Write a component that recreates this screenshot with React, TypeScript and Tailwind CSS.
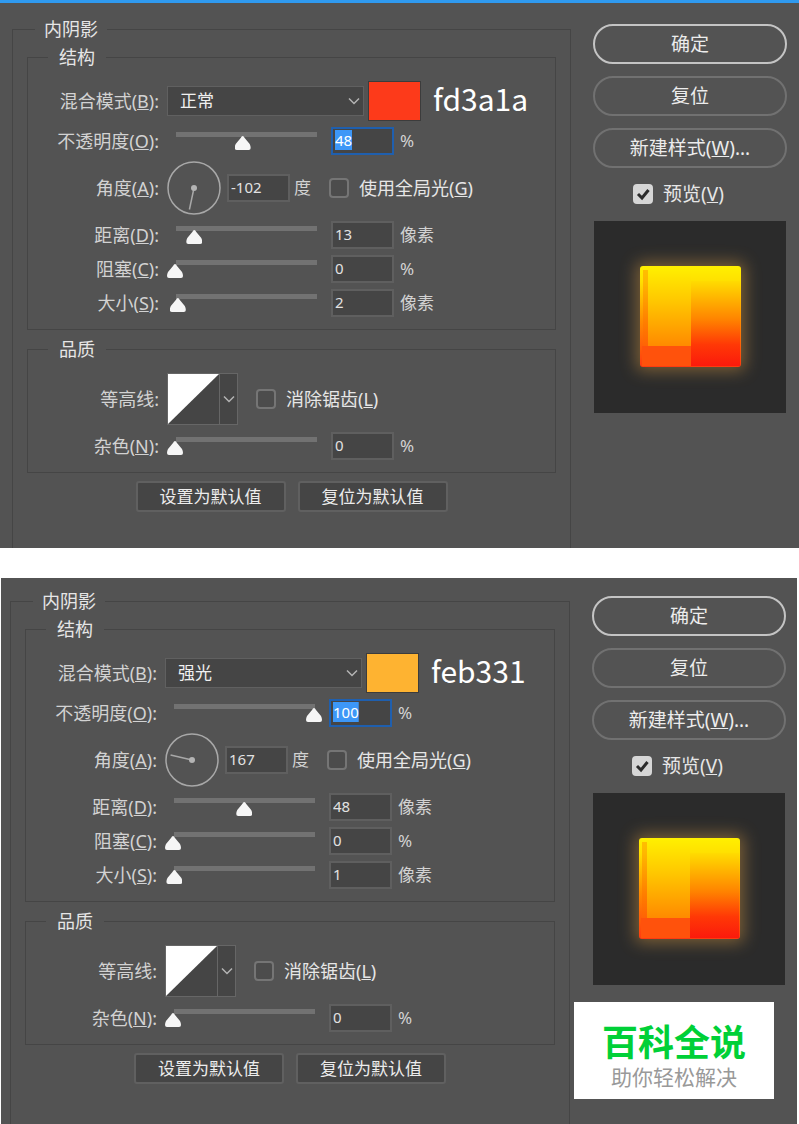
import { useState, type ReactNode } from "react";
import clsx from "clsx";

type Settings = {
  id: string;
  mode: string;
  color: string;
  opacity: number;
  angle: number;
  distance: number;
  choke: number;
  size: number;
  noise: number;
};

const dialogs: Settings[] = [
  { id: "first", mode: "正常", color: "fd3a1a", opacity: 48, angle: -102, distance: 13, choke: 0, size: 2, noise: 0 },
  { id: "second", mode: "强光", color: "feb331", opacity: 100, angle: 167, distance: 48, choke: 0, size: 1, noise: 0 },
];

function Chevron() {
  return (
    <svg viewBox="0 0 12 8" className="w-3 h-2" fill="none" stroke="#b4b4b4" strokeWidth="1.5">
      <path d="M1 1.5 6 6.5 11 1.5" />
    </svg>
  );
}

// Label text with its underlined shortcut letter
function Key({ text, letter, tail }: { text: string; letter?: string; tail?: string }) {
  return (
    <>
      {text}
      {letter && (
        <>
          (<span className="underline underline-offset-1 decoration-1">{letter}</span>)
        </>
      )}
      {tail}
    </>
  );
}

function NumberBox({
  id,
  value,
  active,
  onChange,
}: {
  id: string;
  value: number;
  active?: boolean;
  onChange: (v: number) => void;
}) {
  return (
    <input
      id={id}
      type="text"
      value={value}
      onChange={(e) => onChange(Number(e.target.value) || 0)}
      style={active ? { backgroundSize: `${String(value).length}ch 20px` } : undefined}
      className={clsx(
        "w-[63px] h-7 border-2 pl-0.5 pb-0.5 text-[15px] outline-none bg-[#454545]",
        active
          ? "border-[#1f5fae] text-white bg-[linear-gradient(#3d97f7,#3d97f7)] bg-no-repeat bg-origin-content bg-left"
          : "border-[#5f5f5f] text-[#e2e2e2]"
      )}
    />
  );
}

function Row({ label, htmlFor, className, children }: { label: ReactNode; htmlFor: string; className: string; children: ReactNode }) {
  return (
    <div className={clsx("flex items-center", className)}>
      <label htmlFor={htmlFor} className="w-[131px] shrink-0 mr-2 text-right text-[18px] whitespace-nowrap text-[#d2d2d2]">
        {label}
      </label>
      {children}
    </div>
  );
}

function SliderRow({
  id,
  text,
  letter,
  unit,
  initial,
  max = 100,
  active,
  className,
}: {
  id: string;
  text: string;
  letter: string;
  unit: string;
  initial: number;
  max?: number;
  active?: boolean;
  className: string;
}) {
  const [value, setValue] = useState(initial);
  return (
    <Row label={<Key text={text} letter={letter} tail=":" />} htmlFor={id} className={className}>
      <input
        type="range"
        aria-label={text}
        min={0}
        max={max}
        value={value}
        onChange={(e) => setValue(Number(e.target.value))}
        className="appearance-none w-[157px] h-[18px] mr-[7px] bg-transparent [&::-webkit-slider-runnable-track]:h-[18px] [&::-webkit-slider-runnable-track]:bg-[linear-gradient(to_right,transparent_9px,#727272_9px,#727272_150px,transparent_150px)] [&::-webkit-slider-runnable-track]:bg-no-repeat [&::-webkit-slider-runnable-track]:bg-size-[100%_5px] [&::-webkit-slider-thumb]:appearance-none [&::-webkit-slider-thumb]:mt-1 [&::-webkit-slider-thumb]:w-4 [&::-webkit-slider-thumb]:h-[14px] [&::-webkit-slider-thumb]:bg-[#f6f6f6] [&::-webkit-slider-thumb]:[clip-path:path('M8_0_Q9_0_10_2L15_8Q16_10_16_12Q16_14_14_14L2_14Q0_14_0_12Q0_10_1_8L6_2Q7_0_8_0Z')]"
      />
      <NumberBox id={id} value={value} active={active} onChange={setValue} />
      <span className="ml-1.5 text-[17px] text-[#d2d2d2]">{unit}</span>
    </Row>
  );
}

function CheckBox({ id, checked, className, children }: { id: string; checked?: boolean; className?: string; children: ReactNode }) {
  const [on, setOn] = useState(!!checked);
  return (
    <div className={clsx("flex items-center whitespace-nowrap text-[#e6e6e6]", className)}>
      <span className="grid place-items-center">
        <input
          id={id}
          type="checkbox"
          checked={on}
          onChange={() => setOn(!on)}
          className="col-start-1 row-start-1 appearance-none size-5 rounded border-2 border-[#757575] bg-[#4c4c4c] checked:bg-[#d6d6d6] checked:border-[#d6d6d6]"
        />
        {on && (
          <svg viewBox="0 0 20 20" className="col-start-1 row-start-1 size-5 pointer-events-none" fill="none" stroke="#2c2c2c" strokeWidth="3">
            <path d="M5 10 9 14 15.5 6" />
          </svg>
        )}
      </span>
      <label htmlFor={id} className="ml-2.5">
        {children}
      </label>
    </div>
  );
}

function Dial({ angle }: { angle: number }) {
  const rad = (angle * Math.PI) / 180;
  return (
    <svg viewBox="0 0 54 54" className="size-[54px] shrink-0 mr-1.5" fill="none" stroke="#a8a8a8" strokeWidth="1.5">
      <circle cx="27" cy="27" r="26" />
      <line x1="27" y1="27" x2={27 + 22 * Math.cos(rad)} y2={27 - 22 * Math.sin(rad)} />
      <circle cx="27" cy="27" r="3" fill="#b4b4b4" stroke="none" />
    </svg>
  );
}

function Preview({ id }: { id: string }) {
  return (
    <svg viewBox="0 0 192 192" className="w-full bg-[#2b2b2b]">
      <defs>
        <linearGradient id={`${id}-base`} x1="0" y1="0" x2="0" y2="1">
          <stop offset="0" stopColor="#fff000" />
          <stop offset="0.15" stopColor="#ffe000" />
          <stop offset="0.55" stopColor="#ff8a00" />
          <stop offset="1" stopColor="#ff3a10" />
        </linearGradient>
        <linearGradient id={`${id}-left`} x1="0" y1="0" x2="0" y2="1">
          <stop offset="0" stopColor="#ffec00" />
          <stop offset="0.4" stopColor="#ffc800" />
          <stop offset="1" stopColor="#ff8a00" />
        </linearGradient>
        <linearGradient id={`${id}-right`} x1="0" y1="0" x2="0" y2="1">
          <stop offset="0" stopColor="#ffdc00" />
          <stop offset="0.45" stopColor="#ff8400" />
          <stop offset="0.75" stopColor="#ff3806" />
          <stop offset="1" stopColor="#fb1a0c" />
        </linearGradient>
        <filter id={`${id}-glow`} x="-30%" y="-30%" width="160%" height="160%">
          <feGaussianBlur stdDeviation="8" />
        </filter>
      </defs>
      <rect x="42" y="41" width="109" height="109" rx="6" fill="#c89040" opacity="0.5" filter={`url(#${id}-glow)`} />
      <rect x="46" y="45" width="101" height="101" rx="3" fill={`url(#${id}-base)`} />
      <rect x="49" y="49" width="5" height="76" fill="#ff6a00" opacity="0.35" />
      <rect x="54" y="49" width="43" height="76" fill={`url(#${id}-left)`} />
      <rect x="48" y="125" width="49" height="20" fill="#ff520c" />
      <rect x="97" y="60" width="49" height="85" fill={`url(#${id}-right)`} />
    </svg>
  );
}

function Group({ title, className, children }: { title: string; className: string; children: ReactNode }) {
  return (
    <fieldset className={clsx("border border-[#454545] min-w-0", className)}>
      <legend className="ml-5 px-[11px] h-6 leading-6 text-[18px] text-[#e6e6e6]">{title}</legend>
      {children}
    </fieldset>
  );
}

const pill = "h-10 rounded-full border-2 text-[19px] text-[#ececec]";
const flatButton = "w-[150px] h-[31px] border-2 border-[#606060] rounded-[3px] bg-[#454545] text-[17px] leading-none text-[#ececec]";

function InnerShadowDialog({ data, className }: { data: Settings; className: string }) {
  const [angle, setAngle] = useState(data.angle);
  const { id } = data;

  return (
    <section className={clsx("flex gap-[22px] bg-[#535353]", className)}>
      <fieldset className="flex-1 min-w-0 border border-b-0 border-[#454545] px-3.5">
        <legend className="ml-2 px-[9px] h-6 leading-6 text-[18px] text-[#e6e6e6]">内阴影</legend>

        <Group title="结构" className="mt-1 pt-3 pb-[9px]">
          <Row label={<Key text="混合模式" letter="B" tail=":" />} htmlFor={`${id}-mode`} className="h-10">
            <span className="grid items-center w-[197px] shrink-0">
              <select
                id={`${id}-mode`}
                defaultValue={data.mode}
                className="col-start-1 row-start-1 appearance-none w-full h-[30px] pl-3 border border-[#606060] bg-[#454545] text-[17px] text-[#f0f0f0]"
              >
                <option>正常</option>
                <option>强光</option>
              </select>
              <span className="col-start-1 row-start-1 justify-self-end mr-1 pointer-events-none">
                <Chevron />
              </span>
            </span>
            <button
              type="button"
              aria-label={data.color}
              style={{ backgroundColor: `#${data.color}` }}
              className="w-[53px] h-10 shrink-0 ml-1 border border-[#3c3c3c]"
            />
            <span className="ml-3 pb-1.5 text-[30px] leading-10 text-white font-['Noto_Sans_CJK_SC',sans-serif]">{data.color}</span>
          </Row>
          <SliderRow id={`${id}-opacity`} text="不透明度" letter="O" unit="%" initial={data.opacity} active className="h-10" />
          <Row label={<Key text="角度" letter="A" tail=":" />} htmlFor={`${id}-angle`} className="h-[54px]">
            <Dial angle={angle} />
            <NumberBox id={`${id}-angle`} value={angle} onChange={setAngle} />
            <span className="ml-1 text-[17px] text-[#d2d2d2]">度</span>
            <CheckBox id={`${id}-global`} className="ml-[18px] text-[18px]">
              <Key text="使用全局光" letter="G" />
            </CheckBox>
          </Row>
          <SliderRow id={`${id}-distance`} text="距离" letter="D" unit="像素" initial={data.distance} max={95} className="mt-[3px] h-[34px]" />
          <SliderRow id={`${id}-choke`} text="阻塞" letter="C" unit="%" initial={data.choke} className="h-[34px]" />
          <SliderRow id={`${id}-size`} text="大小" letter="S" unit="像素" initial={data.size} className="h-[34px]" />
        </Group>

        <Group title="品质" className="mt-[7px] pt-3 pb-[9px]">
          <Row label="等高线:" htmlFor={`${id}-contour`} className="h-[52px]">
            <div className="flex h-[52px] shrink-0 border border-[#666666] bg-[#454545]">
              <button id={`${id}-contour`} type="button" className="border-r border-[#666666]">
                <svg viewBox="0 0 51 50" className="w-[51px] h-[50px]">
                  <path d="M0 0H51L0 50Z" fill="#ffffff" />
                </svg>
              </button>
              <button type="button" aria-label="等高线" className="w-[17px] grid place-items-center">
                <Chevron />
              </button>
            </div>
            <CheckBox id={`${id}-aa`} className="ml-[18px] text-[18px]">
              <Key text="消除锯齿" letter="L" />
            </CheckBox>
          </Row>
          <SliderRow id={`${id}-noise`} text="杂色" letter="N" unit="%" initial={data.noise} className="mt-1 h-[34px]" />
        </Group>

        <div className="mt-2 flex justify-center gap-3">
          <button type="button" className={flatButton}>设置为默认值</button>
          <button type="button" className={flatButton}>复位为默认值</button>
        </div>
      </fieldset>

      <div className="w-[194px] shrink-0 mt-[7px] flex flex-col gap-3">
        <button type="button" className={clsx(pill, "border-[#c4c4c4]")}>确定</button>
        <button type="button" className={clsx(pill, "border-[#717171]")}>复位</button>
        <button type="button" className={clsx(pill, "border-[#717171]")}>
          <Key text="新建样式" letter="W" tail="..." />
        </button>
        <CheckBox id={`${id}-preview`} checked className="h-7 ml-10 text-[19px]">
          <Key text="预览" letter="V" />
        </CheckBox>
        <div className="p-px">
          <Preview id={id} />
        </div>
      </div>
    </section>
  );
}

export default function App() {
  return (
    <main className="relative bg-white font-['Noto_Sans','Noto_Sans_CJK_SC',sans-serif]">
      <InnerShadowDialog data={dialogs[0]} className="border-t-3 border-[#2f9af0] pt-3.5 px-3 [&>fieldset]:pb-9" />
      <InnerShadowDialog data={dialogs[1]} className="mt-[30px] ml-px mr-0.5 pt-[11px] pl-[9px] pr-[11px] [&>fieldset]:pb-10" />

      {/* Watermark card over the lower right corner */}
      <div className="absolute right-[25px] bottom-[25px] w-[200px] h-[97px] bg-white flex flex-col items-center pt-4 font-['Noto_Sans_CJK_SC',sans-serif]">
        <p className="text-[36px] leading-[44px] font-bold text-[#00d037]">百科全说</p>
        <p className="text-[21px] leading-7 text-[#999999]">助你轻松解决</p>
      </div>
    </main>
  );
}
